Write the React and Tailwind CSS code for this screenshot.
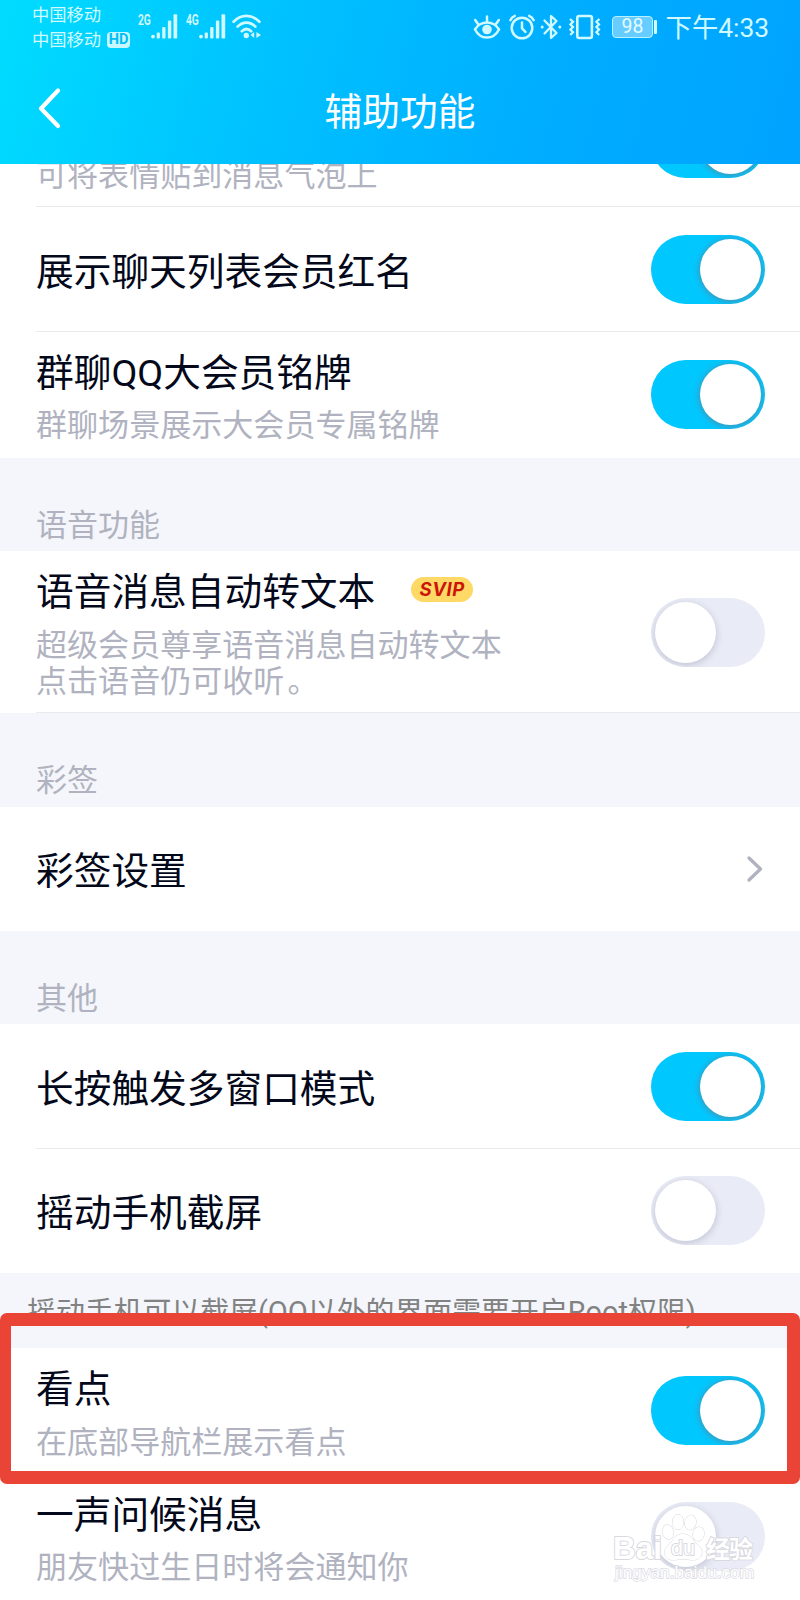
import React from "react";

function Toggle({ on = false, className = "" }) {
  return (
    <div
      className={`flex h-[69px] w-[113.5px] shrink-0 overflow-hidden rounded-full px-1 pt-[4px] ${
        on ? "justify-end bg-[#00c8ff]" : "justify-start bg-[#e9ecf6]"
      } ${className}`}
    >
      <div
        className={`size-[60.5px] rounded-full bg-white ${
          on ? "shadow-[0_1px_6px_1px_rgba(110,115,135,0.6)]" : "shadow-[0_2px_6px_1px_rgba(120,120,150,0.3)]"
        }`}
      />
    </div>
  );
}

function Title({ children, className = "" }) {
  return (
    <div className={`h-10 text-[37.7px] leading-[40px] whitespace-nowrap text-[#03081a] ${className}`}>{children}</div>
  );
}

function Sub({ children, className = "" }) {
  return (
    <div className={`text-[31.05px] leading-[36.4px] whitespace-pre text-[#b0b3bf] ${className}`}>{children}</div>
  );
}

function Section({ children, className = "" }) {
  return <div className={`bg-[#f4f6fb] pl-9 text-[31px] leading-[36px] text-[#b0b3bf] ${className}`}>{children}</div>;
}

function Row({ children, className = "", line = false }) {
  return (
    <div className="bg-white pl-9">
      <div className={`flex justify-between pr-[35.5px] ${line ? "border-b border-[#e9eaec]" : ""} ${className}`}>
        {children}
      </div>
    </div>
  );
}

function Signal() {
  return (
    <svg className="h-[25px] w-[27px]" viewBox="0 0 27 25" fill="#d0faff">
      <circle cx="2" cy="22.6" r="1.9" />
      <rect x="5.7" y="18.5" width="3.2" height="6" rx="1" />
      <rect x="11.2" y="13" width="3.3" height="11.5" rx="1" />
      <rect x="16.9" y="6.5" width="3.4" height="18" rx="1" />
      <rect x="22.5" y="0.3" width="3.7" height="24.2" rx="1" />
    </svg>
  );
}

function Net({ children }) {
  return (
    <span className="h-[14px] w-[13px] origin-left scale-x-[0.66] text-[15.5px] leading-[12px] font-bold whitespace-nowrap">
      {children}
    </span>
  );
}

function StatusBar() {
  return (
    <div className="flex h-[55px] items-start pl-8 text-[#d0faff]">
      <div className="w-[75px] pt-[3px] text-[17.3px] leading-[25px] whitespace-nowrap">
        <div>中国移动</div>
        <div>中国移动</div>
      </div>
      <div className="mt-8 flex h-[16px] w-[23px] items-center justify-center rounded-[4px] bg-[#c8f8ff] text-[14.5px] leading-none font-bold text-[#00bdf8]">
        HD
      </div>
      <div className="mt-[14px] ml-2 flex">
        <Net>2G</Net>
        <Signal />
      </div>
      <div className="mt-[14px] ml-2 flex">
        <Net>4G</Net>
        <Signal />
      </div>
      <svg className="mt-[14px] ml-[6px] h-[25px] w-[30px]" viewBox="0 0 30 25" fill="none" stroke="#d0faff" strokeWidth="2.7" strokeLinecap="round">
        <path d="M1.6 7.7C9.3-.1 19.7-.1 27.4 7.7M5.6 12.6c5.3-5.3 12.5-5.3 17.8 0M9.8 17.2c2.9-2.7 6.5-2.7 9.4 0" />
        <circle cx="14.3" cy="21.5" r="2.7" fill="#d0faff" stroke="none" />
        <path d="M22.2 18v6l-3.6-3zM24.4 18v6l4.6-3z" fill="#d0faff" stroke="none" />
      </svg>
      <svg className="mt-[15px] ml-[211px] h-[25px] w-[28px]" viewBox="0 0 28 25" fill="none" stroke="#d0faff" strokeWidth="2.5" strokeLinecap="round">
        <path d="M2 14.5C7.5 5.3 20.5 5.3 26 14.5C20.5 25.2 7.5 25.2 2 14.5ZM14 1.5V6M2.2 5l3 4.2M25.8 5l-3 4.2" />
        <circle cx="14" cy="14.5" r="4.8" fill="#d0faff" stroke="none" />
      </svg>
      <svg className="mt-[14px] ml-[8px] h-[26px] w-[26px]" viewBox="0 0 26 26" fill="none" stroke="#d0faff" strokeWidth="2.5" strokeLinecap="round">
        <circle cx="13" cy="14" r="10.3" />
        <path d="M13 8.5V14.3l3.4 3.6M1.3 6.2C2.2 4.2 3.8 2.7 5.8 1.9M24.7 6.2C23.8 4.2 22.2 2.7 20.2 1.9" />
      </svg>
      <svg className="mt-[14px] ml-[5px] h-[26px] w-[22px]" viewBox="0 0 22 26" fill="none" stroke="#d0faff" strokeWidth="2.3" strokeLinejoin="round">
        <path d="M4.5 6.5L16.5 19L11 24V2L16.5 7L4.5 19.5" strokeLinecap="round" />
        <circle cx="2.2" cy="13" r="1.5" fill="#d0faff" stroke="none" />
        <circle cx="19.8" cy="13" r="1.5" fill="#d0faff" stroke="none" />
      </svg>
      <svg className="mt-[14px] ml-[6px] h-[26px] w-[34px]" viewBox="0 0 34 26" fill="none" stroke="#d0faff" strokeWidth="2.6">
        <rect x="9.3" y="2" width="14.6" height="22" rx="2" />
        <path d="M2 5l3 2.8-2.6 2.6L5 13l-2.6 2.6L5 18.2 2.2 21M31.4 5l-3 2.8 2.6 2.6-2.6 2.6 2.6 2.6-2.6 2.6 2.8 2.8" strokeWidth="2.2" />
      </svg>
      <div className="mt-4 ml-[10px] flex h-[22px] w-[41px] items-center justify-center rounded-[4px] border border-[#b8f2ff] bg-[#67ccff] text-[19.5px] leading-none text-[#e4fcff]">
        98
      </div>
      <div className="mt-[20px] ml-px h-[14px] w-[3px] rounded-[1px] bg-[#d0faff]" />
      <div className="mt-[13px] ml-[8.5px] text-[26.4px] leading-[30px] whitespace-nowrap">下午4:33</div>
    </div>
  );
}

function Watermark() {
  return (
    <svg className="absolute top-[1508px] left-[608px] h-[80px] w-[156px]" viewBox="0 0 156 80">
      <g fill="#ffffff" stroke="#d9d9df" strokeWidth="1" paintOrder="stroke">
        <ellipse cx="60" cy="24" rx="5.5" ry="7.3" transform="rotate(-12 60 24)" />
        <ellipse cx="70" cy="14" rx="5.5" ry="7.6" />
        <ellipse cx="82.500" cy="14.500" rx="5.5" ry="7.4" transform="rotate(12 82.5 14.5)" />
        <ellipse cx="90.500" cy="26" rx="5.6" ry="7" transform="rotate(15 90.5 26)" />
        <path d="M75 26C67 26 66 32 60.500 37C54 43 56 52 65 52C70 52 70 51 75 51C80 51 80 52 85 52C94 52 97 43 90 37C84 32 83 26 75 26Z" />
        <g fontFamily="Liberation Sans, sans-serif" fontWeight="700" strokeWidth="2">
          <text x="5" y="50.500" fontSize="32" textLength="49" lengthAdjust="spacingAndGlyphs">Bai</text>
          <text x="63" y="47" fontSize="20" textLength="24" lengthAdjust="spacingAndGlyphs" fontWeight="400" strokeWidth="1.800">du</text>
        </g>
        <text x="98" y="49.500" fontSize="24" fontWeight="700" strokeWidth="1.800" fontFamily="Noto Sans CJK SC, sans-serif" textLength="47">经验</text>
        <text x="7" y="70" fontSize="16" strokeWidth="1.300" fontFamily="Liberation Sans, sans-serif" textLength="139" lengthAdjust="spacingAndGlyphs">jingyan.baidu.com</text>
      </g>
    </svg>
  );
}

export default function App() {
  return (
    <div className="relative h-[1600px] w-[800px] overflow-hidden bg-white font-['Roboto','Noto_Sans_CJK_SC',sans-serif]">
      <header className="h-[164px] bg-[linear-gradient(105deg,#00dcff_0%,#00c3ff_32%,#00adff_68%,#00a3ff_100%)]">
        <StatusBar />
        <div className="relative flex h-[109px] justify-center pt-[36.5px]">
          <svg className="absolute top-[32px] left-[36px] h-[43px] w-[26px]" viewBox="0 0 26 43" fill="none" stroke="white" strokeWidth="4.300" strokeLinecap="round" strokeLinejoin="round">
            <path d="M22 3.500L5 21.500L22 39" />
          </svg>
          <h1 className="text-[37.7px] leading-[40px] text-white">辅助功能</h1>
        </div>
      </header>

      <Row line className="h-[43px] items-end overflow-hidden">
        <Sub className="mb-3">可将表情贴到消息气泡上</Sub>
        <Toggle on className="mb-[28px]" />
      </Row>
      <Row line className="h-[125px]">
        <Title className="mt-[45px]">展示聊天列表会员红名</Title>
        <Toggle on className="mt-[28px]" />
      </Row>
      <Row className="h-[126px]">
        <div className="pt-[21px]">
          <Title>群聊QQ大会员铭牌</Title>
          <Sub className="mt-[15px]">群聊场景展示大会员专属铭牌</Sub>
        </div>
        <Toggle on className="mt-[28px]" />
      </Row>

      <Section className="h-[93px] pt-[50px]">语音功能</Section>
      <Row line className="h-[162px]">
        <div className="pt-[21px]">
          <div className="flex">
            <Title>语音消息自动转文本</Title>
            <span className="mt-[5px] ml-[36px] flex h-[25px] w-[62px] items-center justify-center rounded-full bg-[#ffd965] font-['Inter',sans-serif] text-[18.5px] leading-none font-bold tracking-[0.6px] text-[#cc1508] italic">
              SVIP
            </span>
          </div>
          <Sub className="mt-[15.5px]">
            {"超级会员尊享语音消息自动转文本\n点击语音仍可收听"}
            <span className="ml-[3px]">。</span>
          </Sub>
        </div>
        <Toggle className="mt-[47px]" />
      </Row>

      <Section className="h-[94px] pt-[50px]">彩签</Section>
      <Row className="h-[124px]">
        <Title className="mt-[44px]">彩签设置</Title>
        <svg className="mt-[48px] h-[28px] w-[19px]" viewBox="0 0 19 28" fill="none" stroke="#b0b3bf" strokeWidth="3.300" strokeLinecap="round" strokeLinejoin="round">
          <path d="M3 3L14.500 14L3 25" />
        </svg>
      </Row>

      <Section className="h-[93px] pt-[50px]">其他</Section>
      <Row line className="h-[125px]">
        <Title className="mt-[45px]">长按触发多窗口模式</Title>
        <Toggle on className="mt-[28px]" />
      </Row>
      <Row className="h-[124px]">
        <Title className="mt-[44px]">摇动手机截屏</Title>
        <Toggle className="mt-[27px]" />
      </Row>

      <div className="h-[75px] bg-[#f4f6fb] pt-[21px] pl-[27px] text-[28.9px] leading-[36px] whitespace-nowrap text-[#828282]">
        摇动手机可以截屏(QQ以外的界面需要开启Root权限)
      </div>
      <Row className="h-[126px]">
        <div className="pt-[21px]">
          <Title>看点</Title>
          <Sub className="mt-[15.5px]">在底部导航栏展示看点</Sub>
        </div>
        <Toggle on className="mt-[28px]" />
      </Row>
      <Row className="h-[126px]">
        <div className="pt-[21px]">
          <Title>一声问候消息</Title>
          <Sub className="mt-[15px]">朋友快过生日时将会通知你</Sub>
        </div>
        <Toggle className="mt-[28px]" />
      </Row>

      <div className="absolute top-[1312.5px] left-0 h-[171px] w-[800px] rounded-[7px] border-[13px] border-l-[11px] border-[#e94435]" />
      <Watermark />
    </div>
  );
}
